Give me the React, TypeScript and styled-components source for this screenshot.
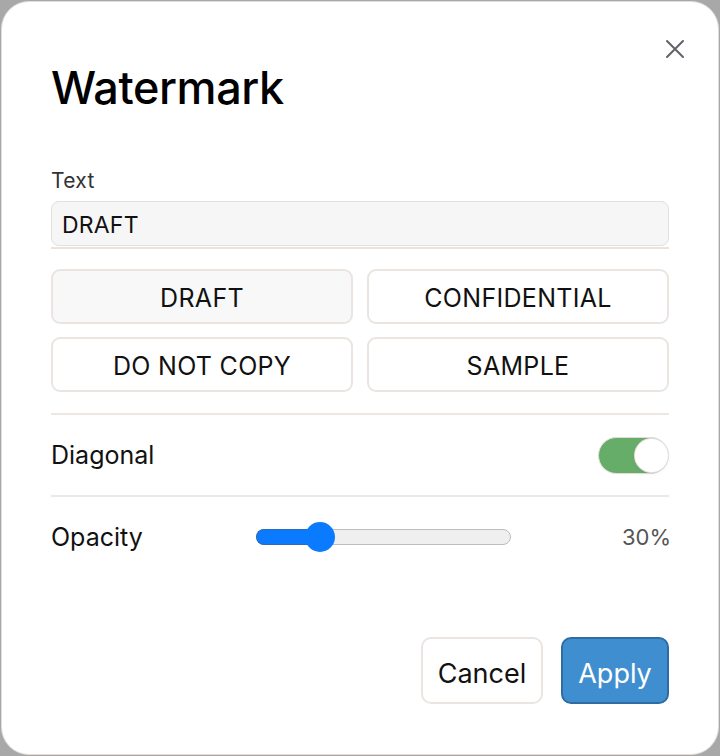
import React, { useState } from 'react';
import styled, { createGlobalStyle } from 'styled-components';

const GlobalStyle = createGlobalStyle`
  html, body {
    margin: 0;
    padding: 0;
    background: #a8a8a8;
  }
  * {
    box-sizing: border-box;
  }
  body {
    font-family: Inter, "Noto Sans", "Liberation Sans", sans-serif;
    color: #111;
  }
`;

const Dialog = styled.div`
  position: relative;
  width: 718px;
  height: 754px;
  margin: 1px 0 0 1px;
  background: #fff;
  border: 1px solid #e2dcd9;
  border-radius: 28px;
  padding: 59px 49px 0 49px;
  display: flex;
  flex-direction: column;
`;

const CloseButton = styled.button`
  position: absolute;
  top: 28px;
  right: 24px;
  width: 38px;
  height: 38px;
  border: none;
  background: transparent;
  padding: 0;
  display: flex;
  align-items: center;
  justify-content: center;
  cursor: pointer;
`;

const Title = styled.h1`
  margin: 0;
  font-size: 45px;
  line-height: 53px;
  font-weight: 500;
  letter-spacing: -0.4px;
  color: #000;
`;

const FieldLabel = styled.label`
  display: block;
  margin-top: 55px;
  font-size: 21px;
  line-height: 24px;
  letter-spacing: 0.3px;
  color: #333;
`;

const InputWrap = styled.div`
  margin-top: 8px;
  padding-bottom: 1px;
  border-bottom: 2px solid #eee2de;
`;

const TextInput = styled.input`
  display: block;
  width: 100%;
  height: 45px;
  border: 1px solid #e6dfdc;
  border-radius: 8px;
  background: #f6f6f6;
  padding: 2px 10px 0;
  font-family: inherit;
  font-size: 23px;
  letter-spacing: 0.2px;
  color: #111;
  outline: none;
`;

const PresetGrid = styled.div`
  margin-top: 20px;
  display: grid;
  grid-template-columns: 1fr 1fr;
  grid-auto-rows: 55px;
  gap: 13px 14px;
`;

const PresetButton = styled.button<{ $active?: boolean }>`
  border: 2px solid #ebe5e2;
  border-radius: 9px;
  padding: 3px 0 0;
  background: ${(p) => (p.$active ? '#f7f8f7' : '#fff')};
  font-family: inherit;
  font-size: 25px;
  letter-spacing: 0.3px;
  color: #111;
  cursor: pointer;
`;

const Divider = styled.div<{ $top?: number }>`
  height: 2px;
  margin-top: ${(p) => p.$top ?? 0}px;
  background: #eee8e5;
`;

const SettingRow = styled.div<{ $height: number }>`
  height: ${(p) => p.$height}px;
  display: flex;
  align-items: center;
  justify-content: space-between;
`;

const RowLabel = styled.span`
  font-size: 25px;
  color: #111;
`;

const Toggle = styled.button<{ $on: boolean }>`
  position: relative;
  width: 71px;
  height: 37px;
  padding: 0;
  border: 1px solid #e4dcd9;
  border-radius: 19px;
  background: ${(p) => (p.$on ? '#66ad6a' : '#ddd')};
  cursor: pointer;
`;

const Knob = styled.span<{ $on: boolean }>`
  position: absolute;
  top: 1px;
  left: ${(p) => (p.$on ? '36px' : '1px')};
  width: 33px;
  height: 33px;
  border-radius: 50%;
  background: #fff;
  box-shadow: 0 0 0 1px #e6e0dd, 0 2px 4px rgba(0, 0, 0, 0.06);
`;

const OpacityRow = styled.div`
  height: 80px;
  display: grid;
  grid-template-columns: 205px 255px 1fr;
  align-items: center;
`;

const SliderTrack = styled.div`
  position: relative;
  height: 16px;
  border-radius: 8px;
  background: #efefef;
  border: 1px solid #bdbdbd;
`;

const SliderFill = styled.div`
  position: absolute;
  left: -1px;
  top: -1px;
  bottom: -1px;
  border-radius: 8px 0 0 8px;
  background: #0a7aff;
  border: 1px solid #2b6bb8;
  border-right: none;
`;

const SliderThumb = styled.div`
  position: absolute;
  top: 50%;
  width: 30px;
  height: 30px;
  margin: -15px 0 0 -15px;
  border-radius: 50%;
  background: #0a7aff;
`;

const Value = styled.span`
  justify-self: end;
  margin-right: -2px;
  font-size: 22px;
  color: #555;
`;

const Footer = styled.div`
  margin-top: 60px;
  display: flex;
  justify-content: flex-end;
  gap: 18px;
`;

const FooterButton = styled.button<{ $primary?: boolean }>`
  width: ${(p) => (p.$primary ? '108px' : '122px')};
  height: 67px;
  padding: 5px 0 0;
  border-radius: 10px;
  border: 2px solid ${(p) => (p.$primary ? '#2f6ca3' : '#ebe5e2')};
  background: ${(p) => (p.$primary ? '#3f8fd0' : '#fff')};
  color: ${(p) => (p.$primary ? '#fff' : '#111')};
  font-family: inherit;
  font-size: 27px;
  cursor: pointer;
`;

const presets = ['DRAFT', 'CONFIDENTIAL', 'DO NOT COPY', 'SAMPLE'];

export default function App() {
  const [text, setText] = useState('DRAFT');
  const [diagonal, setDiagonal] = useState(true);
  const opacity = 30;
  const thumbPos = 25;

  return (
    <>
      <GlobalStyle />
      <Dialog>
        <CloseButton aria-label="Close">
          <svg width="20" height="20" viewBox="0 0 20 20">
            <path d="M2 2 L18 18 M18 2 L2 18" stroke="#5f6368" strokeWidth="2" strokeLinecap="round" />
          </svg>
        </CloseButton>
        <Title>Watermark</Title>
        <FieldLabel>Text</FieldLabel>
        <InputWrap>
          <TextInput value={text} onChange={(e) => setText(e.target.value)} />
        </InputWrap>
        <PresetGrid>
          {presets.map((p) => (
            <PresetButton key={p} $active={p === text} onClick={() => setText(p)}>
              {p}
            </PresetButton>
          ))}
        </PresetGrid>
        <Divider $top={21} />
        <SettingRow $height={80}>
          <RowLabel>Diagonal</RowLabel>
          <Toggle $on={diagonal} onClick={() => setDiagonal(!diagonal)}>
            <Knob $on={diagonal} />
          </Toggle>
        </SettingRow>
        <Divider />
        <OpacityRow>
          <RowLabel>Opacity</RowLabel>
          <SliderTrack>
            <SliderFill style={{ width: `${thumbPos}%` }} />
            <SliderThumb style={{ left: `${thumbPos}%` }} />
          </SliderTrack>
          <Value>{opacity}%</Value>
        </OpacityRow>
        <Footer>
          <FooterButton>Cancel</FooterButton>
          <FooterButton $primary>Apply</FooterButton>
        </Footer>
      </Dialog>
    </>
  );
}
